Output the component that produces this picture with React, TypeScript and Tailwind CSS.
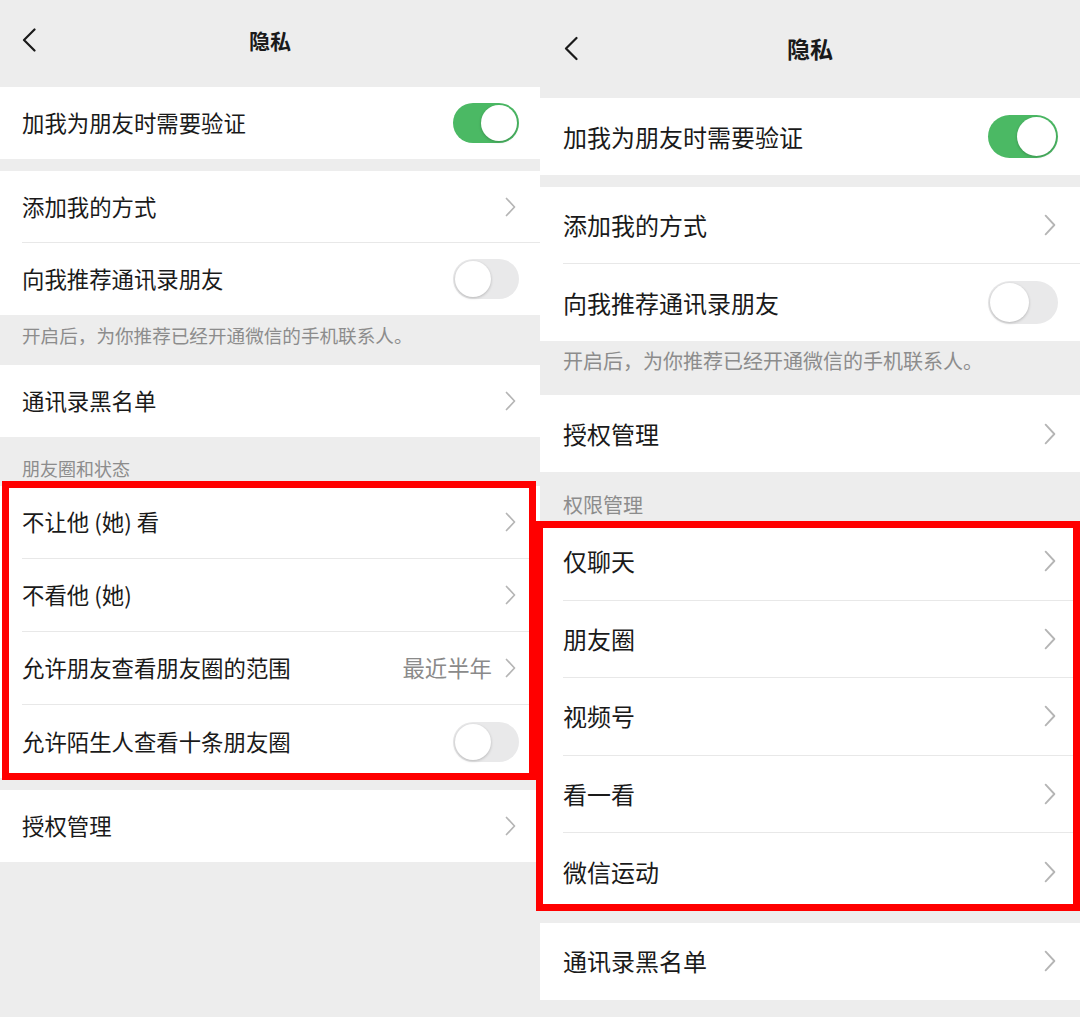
import React from 'react';

type Size = {
  header: string;
  title: string;
  back: string;
  backIcon: { w: number; h: number };
  row: string;
  rowTall: string;
  pad: string;
  text: string;
  note: string;
  section: string;
  toggle: string;
  knob: string;
  knobOn: string;
  chevron: { w: number; h: number };
  gap: string;
  redBox: string;
};

const font = { fontFamily: '"Noto Sans CJK SC", "Noto Sans", sans-serif' };

const small: Size = {
  header: 'h-[87px] pt-[26px]',
  title: 'text-[21px] leading-[28px]',
  back: 'left-[22px] top-[28px]',
  backIcon: { w: 14, h: 24 },
  row: 'h-[72px]',
  rowTall: 'h-[73px]',
  pad: 'pl-[22px]',
  text: 'text-[22.4px] pr-[24px]',
  note: 'h-[50px] pt-[8px] pl-[22px] text-[18.6px] leading-[24px]',
  section: 'h-[49px] pt-[19px] pl-[22px] text-[18px] leading-[24px]',
  toggle: 'w-[66px] h-[40px] -mr-[3px]',
  knob: 'w-[36px] h-[36px]',
  knobOn: 'left-[28px]',
  chevron: { w: 11, h: 20 },
  gap: 'h-[12px]',
  redBox: '-top-[5px] -bottom-[2px] left-[2px] right-[4px] border-[7px]',
};

const large: Size = {
  header: 'h-[98px] pt-[33px]',
  title: 'text-[23px] leading-[30px]',
  back: 'left-[24px] top-[36px]',
  backIcon: { w: 14, h: 25 },
  row: 'h-[77px]',
  rowTall: 'h-[77.5px]',
  pad: 'pl-[23px]',
  text: 'text-[24px] pr-[24px]',
  note: 'h-[54px] pt-[6px] pl-[23px] text-[20px] leading-[28px]',
  section: 'h-[51px] pt-[20px] pl-[23px] text-[20px] leading-[26px]',
  toggle: 'w-[70px] h-[43px] -mr-[2px]',
  knob: 'w-[39px] h-[39px]',
  knobOn: 'left-[29px]',
  chevron: { w: 12, h: 22 },
  gap: 'h-[12px]',
  redBox: '-top-[2px] bottom-[0px] -left-[4px] right-[0px] border-[7px]',
};

type Item = {
  label: string;
  value?: string;
  toggle?: boolean;
};

const Chevron = ({ s }: { s: Size }) => (
  <svg width={s.chevron.w} height={s.chevron.h} viewBox="0 0 11 20" fill="none">
    <path d="M1.5 1.5 L9.5 10 L1.5 18.5" stroke="#b5b5b5" strokeWidth="1.7" strokeLinecap="round" strokeLinejoin="round" />
  </svg>
);

const Toggle = ({ s, on }: { s: Size; on: boolean }) => (
  <div
    className={`relative rounded-full ${s.toggle} ${
      on ? 'bg-[#4bb964]' : 'bg-[#e9e9ea]'
    }`}
  >
    <div
      className={`absolute top-[2px] rounded-full bg-white shadow-[0_1px_3px_rgba(0,0,0,0.22)] ${s.knob} ${
        on ? s.knobOn : 'left-[2px]'
      }`}
    />
  </div>
);

const Group = ({ s, items, tall }: { s: Size; items: Item[]; tall?: boolean }) => (
  <div className="bg-white">
    {items.map((item, i) => (
      <div key={item.label} className={s.pad}>
        <div
          className={`flex items-center ${tall ? s.rowTall : s.row} ${s.text} ${
            i < items.length - 1 ? 'border-b border-[#e8e8e8]' : ''
          }`}
        >
          <span className="flex-1 text-[#1a1a1a]">{item.label}</span>
          {item.value && <span className="mr-[13px] text-[#8a8a8a]">{item.value}</span>}
          {item.toggle !== undefined ? <Toggle s={s} on={item.toggle} /> : <Chevron s={s} />}
        </div>
      </div>
    ))}
  </div>
);

const Marked = ({ s, children }: { s: Size; children: React.ReactNode }) => (
  <div className="relative">
    {children}
    <div className={`absolute pointer-events-none border-[#ff0000] ${s.redBox}`} />
  </div>
);

const Header = ({ s }: { s: Size }) => (
  <div className={`relative flex justify-center ${s.header}`}>
    <svg
      className={`absolute ${s.back}`}
      width={s.backIcon.w}
      height={s.backIcon.h}
      viewBox="0 0 14 24"
      fill="none"
    >
      <path d="M12.5 1.5 L2 12 L12.5 22.5" stroke="#1a1a1a" strokeWidth="2.2" strokeLinecap="round" strokeLinejoin="round" />
    </svg>
    <span className={`font-semibold text-[#1a1a1a] ${s.title}`}>隐私</span>
  </div>
);

const Note = ({ s, children }: { s: Size; children: React.ReactNode }) => (
  <div className={`text-[#8c8c8c] ${s.note}`}>{children}</div>
);

const Section = ({ s, children }: { s: Size; children: React.ReactNode }) => (
  <div className={`text-[#8c8c8c] ${s.section}`}>{children}</div>
);

const LeftPhone = () => {
  const s = small;
  return (
    <div className="relative w-[540px] h-full bg-[#ededed]">
      <Header s={s} />
      <Group s={s} items={[{ label: '加我为朋友时需要验证', toggle: true }]} />
      <div className={s.gap} />
      <Group
        s={s}
        items={[
          { label: '添加我的方式' },
          { label: '向我推荐通讯录朋友', toggle: false },
        ]}
      />
      <Note s={s}>开启后，为你推荐已经开通微信的手机联系人。</Note>
      <Group s={s} items={[{ label: '通讯录黑名单' }]} />
      <Section s={s}>朋友圈和状态</Section>
      <Marked s={s}>
        <Group
          s={s}
          tall
          items={[
            { label: '不让他 (她) 看' },
            { label: '不看他 (她)' },
            { label: '允许朋友查看朋友圈的范围', value: '最近半年' },
            { label: '允许陌生人查看十条朋友圈', toggle: false },
          ]}
        />
      </Marked>
      <div className={s.gap} />
      <Group s={s} items={[{ label: '授权管理' }]} />
    </div>
  );
};

const RightPhone = () => {
  const s = large;
  return (
    <div className="relative w-[540px] h-full bg-[#ededed]">
      <Header s={s} />
      <Group s={s} items={[{ label: '加我为朋友时需要验证', toggle: true }]} />
      <div className={s.gap} />
      <Group
        s={s}
        items={[
          { label: '添加我的方式' },
          { label: '向我推荐通讯录朋友', toggle: false },
        ]}
      />
      <Note s={s}>开启后，为你推荐已经开通微信的手机联系人。</Note>
      <Group s={s} items={[{ label: '授权管理' }]} />
      <Section s={s}>权限管理</Section>
      <Marked s={s}>
        <Group
          s={s}
          tall
          items={[
            { label: '仅聊天' },
            { label: '朋友圈' },
            { label: '视频号' },
            { label: '看一看' },
            { label: '微信运动' },
          ]}
        />
      </Marked>
      <div className={s.gap} />
      <Group s={s} items={[{ label: '通讯录黑名单' }]} />
    </div>
  );
};

export default function App() {
  return (
    <div className="flex w-[1080px] h-[1017px] overflow-hidden bg-[#ededed]" style={font}>
      <LeftPhone />
      <RightPhone />
    </div>
  );
}
